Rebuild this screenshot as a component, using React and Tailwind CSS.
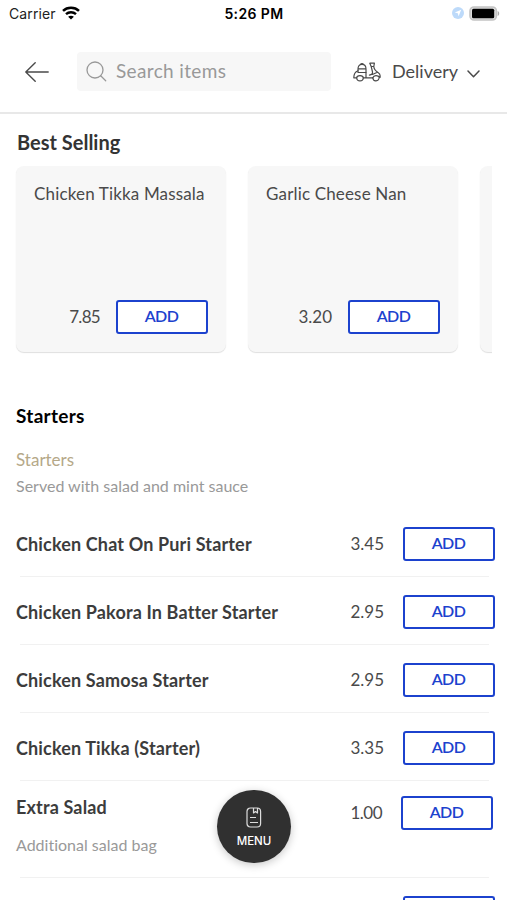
import React from "react";

const bestSelling = [
  { name: "Chicken Tikka Massala", price: "7.85", priceSpacing: "tracking-[-0.7px]" },
  { name: "Garlic Cheese Nan", price: "3.20", priceSpacing: "tracking-normal" },
];

const starters = [
  { name: "Chicken Chat On Puri Starter", price: "3.45" },
  { name: "Chicken Pakora In Batter Starter", price: "2.95" },
  { name: "Chicken Samosa Starter", price: "2.95" },
  { name: "Chicken Tikka (Starter)", price: "3.35" },
];

const AddButton = () => (
  <button className="flex h-[34px] w-[92px] shrink-0 justify-center rounded-[3px] border-2 border-[#1c42ce] bg-white pt-[5px] pr-px text-[16px] leading-[17px] font-semibold tracking-[-0.6px] text-[#1c42ce]">
    ADD
  </button>
);

const StatusBar = () => (
  <div className="grid h-7 grid-cols-3 items-center pr-[7px] pl-[9px] font-[Inter,sans-serif] text-black">
    <div className="-mt-0.5 flex items-center gap-1.5">
      <span className="text-[14px] tracking-[0.1px] text-[#222]">Carrier</span>
      <svg width="18" height="14" viewBox="0 0 18 14" fill="none" stroke="#000">
        <path d="M1 4.8C5.4.6 12.6.6 17 4.8" strokeWidth="2.5" />
        <path d="M4 8.2c2.8-2.6 7.2-2.6 10 0" strokeWidth="2.4" />
        <path d="M9 13.6 6.1 10.8c1.6-1.5 4.2-1.5 5.8 0Z" fill="#000" stroke="none" />
      </svg>
    </div>
    <span className="-mt-0.5 pr-px text-center text-[14px] font-semibold tracking-[0.4px]">5:26 PM</span>
    <div className="-mt-0.5 flex items-center justify-end gap-1.5">
      <svg className="mr-[-1px]" width="12" height="12" viewBox="0 0 12 12">
        <circle cx="6" cy="6" r="6" fill="#bddafa" />
        <path d="m9.2 2.8-2.6 6.4-.8-3-3-.8Z" fill="#fff" />
      </svg>
      <svg width="31" height="15" viewBox="0 0 31 15">
        <rect x="1" y="1" width="26.4" height="13" rx="4" fill="#ddd" stroke="#c4c4c4" strokeWidth="1.6" />
        <rect x="3" y="2.8" width="22.2" height="9.4" rx="1.5" fill="#000" />
        <path d="M28.7 5v5c2-.8 2-4.2 0-5Z" fill="#aaa" />
      </svg>
    </div>
  </div>
);

const ScooterIcon = () => (
  <svg width="28" height="20" viewBox="0 0 28 20" fill="none" stroke="#4a4a4a" strokeWidth="1.2" strokeLinejoin="round" strokeLinecap="round">
    {/* delivery box and rear body */}
    <path d="M5 10.500V7c0-2.800 1.400-4.600 4-4.600s4 1.800 4 4.600v3.500ZM7.600 2.400c.3-1.200 2.500-1.200 2.800 0M5 6.800h8" />
    <path d="M5 8.800C2.200 9.800.8 12.300.8 15.800h2.900M10.300 15.800h9.500M13 10.500v5.300" />
    <path d="M3.700 15.800c.2-3 6.400-3 6.600 0-.2 4.200-6.400 4.200-6.600 0Z" />
    {/* steering column and front wheel */}
    <path d="M16.800 1.200h4.600l-.6 3.300h-2.600ZM18.200 4.500l1.200 5c.5 2.200-.6 3.200-3 3.700M20.800 4.500c.2 3 1.700 4.500 4.200 5.900 1.800 1.100 2.500 3 2 5.100-2.500-2.800-6.200-2.500-7.200.3M19.400 12.500l5-2.300" />
    <path d="M19.800 15.800c.4 4.200 6 4.200 6.500-.8" />
  </svg>
);

const Header = () => (
  <header className="flex h-[86px] items-start border-b-2 border-[#e8e8e8] pt-6 pl-[25px]">
    <svg className="mt-2.5 shrink-0" width="24" height="20" viewBox="0 0 24 20" fill="none" stroke="#4a4a4a" strokeWidth="1.4" strokeLinecap="round" strokeLinejoin="round">
      <path d="M23.200 10H.8M10.200.8.8 10l9.400 9.200" />
    </svg>
    <div className="ml-7 flex h-[39px] w-[254px] shrink-0 items-center rounded bg-[#f7f7f7] pl-[9px] text-[#999]">
      <svg width="21" height="21" viewBox="0 0 21 21" fill="none" stroke="currentColor" strokeWidth="1.3" strokeLinecap="round">
        <circle cx="9" cy="9" r="8" />
        <path d="m14.700 14.700 5 5" />
      </svg>
      <span className="ml-[9px] text-[19px] tracking-[0.36px]">Search items</span>
    </div>
    <div className="ml-[22px] flex h-[39px] items-center text-[#4a4a4a]">
      <ScooterIcon />
      <span className="ml-[11px] text-[18px]">Delivery</span>
      <svg className="mt-1 ml-[9px]" width="13" height="8" viewBox="0 0 13 8" fill="none" stroke="currentColor" strokeWidth="1.5" strokeLinecap="round" strokeLinejoin="round">
        <path d="m1 1 5.500 5.700L12 1" />
      </svg>
    </div>
  </header>
);

const BestSelling = () => (
  <section className="pt-4">
    <h2 className="pl-[17px] text-[20px] leading-6 font-bold text-[#333]">Best Selling</h2>
    <div className="mr-[15px] ml-[13px] flex h-[201px] gap-[22px] overflow-hidden pt-3 pl-[3px]">
      {bestSelling.map((item) => (
        <div
          key={item.name}
          className="flex h-[186px] w-[210px] shrink-0 flex-col justify-between rounded-lg bg-[#f7f7f7] pt-4 pr-[18px] pb-[18px] pl-[18px] shadow-[0_1px_1px_rgba(0,0,0,0.13)]"
        >
          <h3 className="text-[17px] leading-6 tracking-[0.16px] whitespace-nowrap text-[#4a4a4a]">{item.name}</h3>
          <div className="flex items-center justify-end gap-4">
            <span className={`text-[17px] leading-[34px] text-[#4a4a4a] ${item.priceSpacing}`}>{item.price}</span>
            <AddButton />
          </div>
        </div>
      ))}
      <div className="h-[186px] w-[210px] shrink-0 rounded-lg bg-[#f7f7f7] shadow-[0_1px_1px_rgba(0,0,0,0.13)]" />
    </div>
  </section>
);

const MenuButton = () => (
  <button className="absolute top-[790px] left-[217px] flex h-[73px] w-[74px] flex-col items-center rounded-full bg-[#303030] pt-[17px] font-[Inter,sans-serif] text-white shadow-[0_2px_8px_rgba(0,0,0,0.22)]">
    <svg width="16" height="21" viewBox="0 0 16 21" fill="none" stroke="#ddd" strokeWidth="1.2" strokeLinejoin="round">
      <rect x="1" y="1" width="13.600" height="19" rx="3.500" />
      <path d="M7.500 1v5l2-1.500 2 1.500V1M4 10.500h6M4 15.500h8" />
    </svg>
    <span className="mt-[5px] text-[11.5px] leading-4 font-medium">MENU</span>
  </button>
);

export default function App() {
  return (
    <div className="relative h-[900px] w-[507px] overflow-hidden bg-white font-[Lato,'Open_Sans',sans-serif] [font-variant-ligatures:none]">
      <StatusBar />
      <Header />
      <BestSelling />

      <section className="pt-[47px] pl-4">
        <h2 className="text-[19px] leading-7 font-bold tracking-[0.3px] text-black">Starters</h2>
        <h3 className="mt-[18px] text-[17px] leading-6 text-[#b5a888]">Starters</h3>
        <p className="mt-0.5 text-[16px] leading-6 text-[#999]">Served with salad and mint sauce</p>
        <ul className="mt-[11px]">
          {starters.map((item) => (
            <li key={item.name}>
              <div className="flex h-[67px] items-start pt-[18px] pr-3 leading-[34px]">
                <span className="grow text-[18px] font-bold tracking-[0.15px] text-[#3c3c3c]">{item.name}</span>
                <span className="mr-[19px] text-[17px] text-[#4a4a4a]">{item.price}</span>
                <AddButton />
              </div>
              <div className="mr-[18px] ml-1 h-px bg-[#f1f1f1]" />
            </li>
          ))}
          <li>
            <div className="flex h-24 items-start pt-[15px] pr-3.5">
              <div className="-mt-px grow">
                <h4 className="text-[18px] leading-6 font-bold tracking-[0.15px] text-[#3c3c3c]">Extra Salad</h4>
                <p className="mt-[14px] text-[16px] leading-6 text-[#999]">Additional salad bag</p>
              </div>
              <span className="mr-[19px] text-[17px] leading-[34px] tracking-[-0.5px] text-[#4a4a4a]">1.00</span>
              <AddButton />
            </div>
            <div className="mr-[18px] ml-1 h-px bg-[#f1f1f1]" />
          </li>
          {/* next row, only the top edge of its button is on screen */}
          <li className="flex justify-end pt-[18px] pr-3">
            <div className="h-[4px] w-[92px] rounded-t-[3px] border-2 border-b-0 border-[#1c42ce]" />
          </li>
        </ul>
      </section>

      <MenuButton />
    </div>
  );
}
